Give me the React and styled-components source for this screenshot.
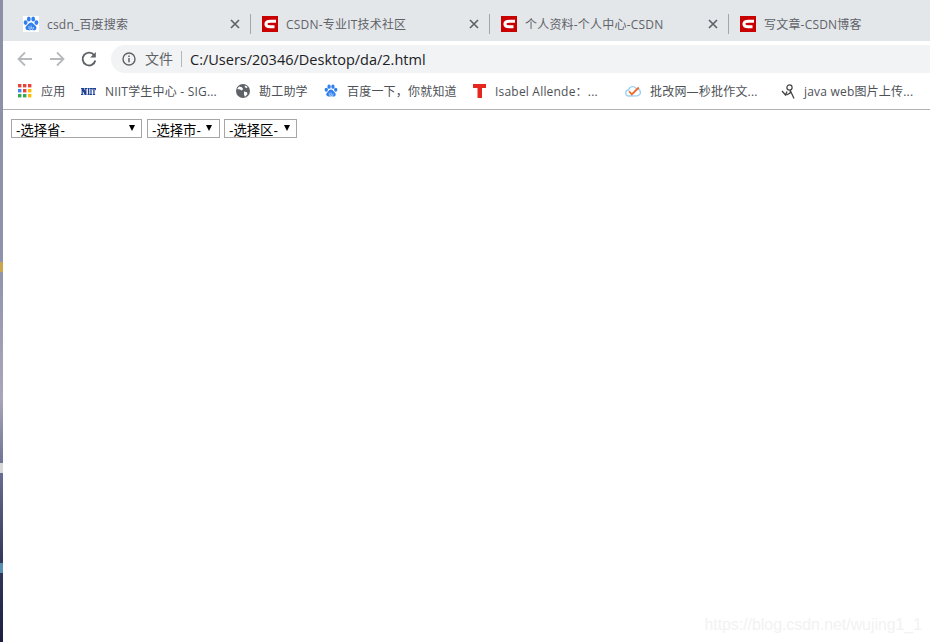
import styled, { createGlobalStyle } from 'styled-components';

const GlobalStyle = createGlobalStyle`
  html, body { margin: 0; padding: 0; height: 100%; background: #fff; }
  body { overflow: hidden; font-family: "Open Sans", "Noto Sans CJK SC", sans-serif; }
`;

const Page = styled.div`
  display: flex;
  width: 100%;
  height: 642px;
`;

const Wallpaper = styled.div`
  position: relative;
  flex: 0 0 3px;
  background: linear-gradient(180deg, #8b90a4 0%, #8f92ad 40%, #a8a6b8 62%, #6a7093 73%, #343a5c 87%, #1b2040 100%);
`;

const DesktopSpeck = styled.span`
  position: absolute;
  left: 0;
  top: ${(p) => p.$top}px;
  width: 3px;
  height: ${(p) => p.$h}px;
  background: ${(p) => p.$bg};
`;

const Browser = styled.div`
  flex: 1;
  min-width: 0;
  display: flex;
  flex-direction: column;
`;

const TabStrip = styled.div`
  display: flex;
  align-items: center;
  height: 41px;
  padding: 7px 0 0 9px;
  box-sizing: border-box;
  background: #e4e7ea;
`;

const Tab = styled.div`
  display: flex;
  align-items: center;
  width: 239px;
  flex: 0 0 239px;
  height: 20px;
  box-sizing: border-box;
  padding: 0 0 0 11px;
  border-right: ${(p) => (p.$last ? 'none' : '1px solid #a4a7aa')};
`;

const TabTitle = styled.span`
  flex: 1;
  margin-left: 8px;
  padding-top: 1px;
  font-size: 12px;
  line-height: 20px;
  letter-spacing: 0.2px;
  color: #5f6368;
  white-space: nowrap;
`;

const CloseBox = styled.span`
  display: flex;
  margin-right: 10px;
`;

const Toolbar = styled.div`
  display: flex;
  align-items: center;
  height: 32px;
  padding: 4px 0 0 12px;
  box-sizing: border-box;
  background: #fff;
`;

const NavButton = styled.span`
  display: flex;
  width: 20px;
  height: 20px;
  margin-right: ${(p) => p.$gap}px;
`;

const Omnibox = styled.div`
  flex: 1;
  display: flex;
  align-items: center;
  height: 28px;
  padding-left: 11px;
  border-radius: 14px 0 0 14px;
  background: #f1f3f4;
`;

const SecurityLabel = styled.span`
  margin-left: 9px;
  padding-right: 8px;
  border-right: 1px solid #b4b7ba;
  font-size: 14px;
  line-height: 16px;
  color: #5f6368;
`;

const UrlText = styled.span`
  margin-left: 8px;
  font-size: 14.5px;
  color: #202124;
  white-space: nowrap;
`;

const BookmarkBar = styled.div`
  display: flex;
  align-items: center;
  height: 37px;
  padding: 0 0 0 15px;
  box-sizing: border-box;
  background: #fff;
  border-bottom: 1px solid #b2b2b2;
`;

const Bookmark = styled.div`
  display: flex;
  align-items: center;
  gap: ${(p) => p.$gap || 9}px;
  margin-right: ${(p) => p.$after}px;
`;

const BookmarkText = styled.span`
  display: block;
  width: ${(p) => p.$w}px;
  padding-top: 1px;
  font-size: 12px;
  line-height: 18px;
  letter-spacing: 0.2px;
  color: #4d5156;
  white-space: nowrap;
`;

const Content = styled.main`
  position: relative;
  flex: 1;
  display: flex;
  align-items: flex-start;
  padding: 9px 0 0 8px;
  background: #fff;
`;

const SelectBox = styled.label`
  position: relative;
  display: block;
  width: ${(p) => p.$w}px;
  height: 19px;
  margin-right: ${(p) => p.$after}px;
  &::after {
    content: "";
    position: absolute;
    top: 6px;
    right: ${(p) => p.$arrow}px;
    border-style: solid;
    border-width: 6px 3.5px 0 3.5px;
    border-color: #000 transparent transparent transparent;
    pointer-events: none;
  }
`;

const Select = styled.select`
  appearance: none;
  display: block;
  width: 100%;
  height: 19px;
  margin: 0;
  padding: 3px 0 0 4px;
  box-sizing: border-box;
  border: 1px solid #a6a6a6;
  border-radius: 0;
  background: #fff;
  color: #000;
  font-family: "Liberation Sans", "Noto Sans CJK SC", sans-serif;
  font-size: 13.33px;
  line-height: 16px;
`;

const Watermark = styled.span`
  position: absolute;
  right: 8px;
  bottom: 7px;
  font-family: "Liberation Sans", sans-serif;
  font-size: 15.85px;
  line-height: 20px;
  color: #f2f2f2;
  white-space: nowrap;
`;

const BaiduIcon = ({ size = 16 }) => (
  <svg width={size} height={size} viewBox="0 0 16 16">
    <rect width="16" height="16" fill="#fff" />
    <g fill="#2f7fee">
      <ellipse cx="2.6" cy="6.6" rx="1.9" ry="2.3" />
      <ellipse cx="5.8" cy="3" rx="1.9" ry="2.5" />
      <ellipse cx="10.2" cy="3" rx="1.9" ry="2.5" />
      <ellipse cx="13.4" cy="6.6" rx="1.9" ry="2.3" />
      <path d="M8 6.4c1.7 0 2.5 1.5 3.6 2.6 1 .9 2.100 1.700 1.800 3.200-.3 1.700-2 2.400-3.300 2.100-.8-.2-1.400-.4-2.100-.4-.8 0-1.400.3-2.200.4-1.400.2-3.100-.5-3.300-2.200-.2-1.400.8-2.100 1.800-3.100C5.400 8 6.300 6.400 8 6.400z" />
    </g>
    <path d="M6 10v2.300a1 1 0 0 0 2 0V9.500M8.800 11v1.500a.8.8 0 0 0 1.600 0V11" fill="none" stroke="#cfe2fb" strokeWidth="0.8" />
  </svg>
);

const CsdnIcon = () => (
  <svg width="16" height="16" viewBox="0 0 16 16">
    <rect width="16" height="16" fill="#c90000" />
    <path d="M14 5.300H8.800C5.400 5.300 3.900 6.600 3.900 8.100 3.900 9.700 5.400 10.800 8.200 10.800h4.300" fill="none" stroke="#fff" strokeWidth="3" />
  </svg>
);

const CloseIcon = () => (
  <svg width="10" height="10" viewBox="0 0 10 10">
    <path d="M1 1l8 8M9 1l-8 8" stroke="#5f6368" strokeWidth="1.7" />
  </svg>
);

const ArrowIcon = ({ flip }) => (
  <svg width="20" height="20" viewBox="0 0 20 20" style={flip ? { transform: 'scaleX(-1)' } : undefined}>
    <path d="M17 10H4M10 3.500L3.500 10l6.500 6.500" fill="none" stroke="#b7babd" strokeWidth="1.800" />
  </svg>
);

const ReloadIcon = () => (
  <svg width="20" height="20" viewBox="0 0 20 20">
    <path d="M15.200 6.200A6.400 6.400 0 1 0 16.300 11.500" fill="none" stroke="#5f6368" strokeWidth="1.900" />
    <path d="M16.800 3v5.600h-5.600z" fill="#5f6368" />
  </svg>
);

const InfoIcon = () => (
  <svg width="14" height="14" viewBox="0 0 14 14">
    <circle cx="7" cy="7" r="6" fill="none" stroke="#5f6368" strokeWidth="1.400" />
    <path d="M7 6v4.200M7 3.600v1.400" stroke="#5f6368" strokeWidth="1.500" />
  </svg>
);

const APP_COLORS = ['#ea4335', '#ea4335', '#ea4335', '#4285f4', '#ea4335', '#fbbc04', '#34a853', '#34a853', '#fbbc04'];

const AppsIcon = () => (
  <svg width="14" height="14" viewBox="0 0 14 14">
    {APP_COLORS.map((c, i) => (
      <rect key={i} x={(i % 3) * 5} y={Math.floor(i / 3) * 5} width="3.400" height="3.400" fill={c} />
    ))}
  </svg>
);

const NiitIcon = () => (
  <svg width="15" height="7" viewBox="0 0 15 7">
    <path d="M0 0h2.800L4.200 3V1H3.600V0H6v1h-.5v6H3.700L1.800 3v3h.6v1H0V6h.6V1H0zM6.500 0h2.200v1h-.4v5h.4v1H6.500V6h.4V1h-.4zM9 0h2v1h-.4v5h.4v1H9V6h.4V1H9zM11.200 0H15v2.300h-.8V1h-.6v5h.5v1h-2.300V6h.5V1h-.6v1.300h-.5z" fill="#1c3f94" />
  </svg>
);

const GlobeIcon = () => (
  <svg width="14" height="14" viewBox="0 0 14 14">
    <circle cx="7" cy="7" r="7" fill="#5f6368" />
    <path d="M3 2.400l3 .8 1.200 2-2 1.400-1-1.200L1.200 5zM8 7.400l3 .8.4 2-2.400 2.600-1-2.400zM9 1.400l2.600 1.400-.8 1.400L8.600 3z" fill="#fff" />
  </svg>
);

const TIcon = () => (
  <svg width="13" height="14" viewBox="0 0 13 14">
    <path d="M0 0h13v4H9v10H4.500V4H0z" fill="#e5281f" />
  </svg>
);

const CheckCloudIcon = () => (
  <svg width="16" height="12" viewBox="0 0 16 12">
    <path d="M4 11a3 3 0 0 1-.4-6A4.200 4.200 0 0 1 11.500 4a3.400 3.400 0 0 1 1 6.800z" fill="#fff" stroke="#9fd2f2" strokeWidth="1.400" />
    <path d="M4.200 6.200l2.600 3.300 7-7" fill="none" stroke="#ee6a26" strokeWidth="1.800" />
  </svg>
);

const SketchIcon = () => (
  <svg width="15" height="15" viewBox="0 0 15 15">
    <circle cx="8.500" cy="3.500" r="2.600" fill="none" stroke="#444" strokeWidth="1.200" />
    <path d="M1 7l3.500 4L6 7.500M9.500 6l-.5 3-3.500 2M9.500 7l3.500 7.500" fill="none" stroke="#444" strokeWidth="1.300" />
  </svg>
);

const TABS = [
  { title: 'csdn_百度搜索', icon: <BaiduIcon /> },
  { title: 'CSDN-专业IT技术社区', icon: <CsdnIcon /> },
  { title: '个人资料-个人中心-CSDN', icon: <CsdnIcon /> },
  { title: '写文章-CSDN博客', icon: <CsdnIcon />, last: true },
];

const BOOKMARKS = [
  { title: '应用', icon: <AppsIcon />, w: 24, after: 16 },
  { title: 'NIIT学生中心 - SIG...', icon: <NiitIcon />, w: 114, after: 17 },
  { title: '勘工助学', icon: <GlobeIcon />, w: 48, after: 17 },
  { title: '百度一下，你就知道', icon: <BaiduIcon size={14} />, w: 108, after: 18 },
  { title: 'Isabel Allende：...', icon: <TIcon />, w: 102, after: 28, gap: 9 },
  { title: '批改网—秒批作文...', icon: <CheckCloudIcon />, w: 107, after: 24 },
  { title: 'java web图片上传...', icon: <SketchIcon />, w: 108, after: 0, gap: 8 },
];

const SELECTS = [
  { label: '-选择省-', w: 131, arrow: 7, after: 5 },
  { label: '-选择市-', w: 73, arrow: 8, after: 4 },
  { label: '-选择区-', w: 73, arrow: 7, after: 0 },
];

export default function App() {
  return (
    <>
      <GlobalStyle />
      <Page>
        <Wallpaper>
          <DesktopSpeck $top={262} $h={10} $bg="#c9a64e" />
          <DesktopSpeck $top={463} $h={10} $bg="#d8d8d8" />
          <DesktopSpeck $top={563} $h={10} $bg="#5b8fb0" />
        </Wallpaper>
        <Browser>
          <TabStrip>
            {TABS.map((t) => (
              <Tab key={t.title} $last={t.last}>
                {t.icon}
                <TabTitle>{t.title}</TabTitle>
                {!t.last && (
                  <CloseBox>
                    <CloseIcon />
                  </CloseBox>
                )}
              </Tab>
            ))}
          </TabStrip>
          <Toolbar>
            <NavButton $gap={12}>
              <ArrowIcon />
            </NavButton>
            <NavButton $gap={12}>
              <ArrowIcon flip />
            </NavButton>
            <NavButton $gap={12}>
              <ReloadIcon />
            </NavButton>
            <Omnibox>
              <InfoIcon />
              <SecurityLabel>文件</SecurityLabel>
              <UrlText>C:/Users/20346/Desktop/da/2.html</UrlText>
            </Omnibox>
          </Toolbar>
          <BookmarkBar>
            {BOOKMARKS.map((b) => (
              <Bookmark key={b.title} $after={b.after} $gap={b.gap}>
                {b.icon}
                <BookmarkText $w={b.w}>{b.title}</BookmarkText>
              </Bookmark>
            ))}
          </BookmarkBar>
          <Content>
            {SELECTS.map((s) => (
              <SelectBox key={s.label} $w={s.w} $arrow={s.arrow} $after={s.after}>
                <Select defaultValue={s.label}>
                  <option>{s.label}</option>
                </Select>
              </SelectBox>
            ))}
            <Watermark>https://blog.csdn.net/wujing1_1</Watermark>
          </Content>
        </Browser>
      </Page>
    </>
  );
}
